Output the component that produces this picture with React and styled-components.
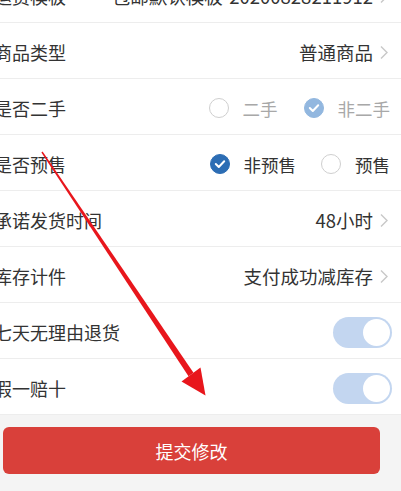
import React from 'react';
import styled, { createGlobalStyle } from 'styled-components';

const GlobalStyle = createGlobalStyle`
  html, body {
    margin: 0;
    padding: 0;
    background: #f4f4f4;
    overflow: hidden;
  }
  body {
    font-family: "Noto Sans CJK SC", "Noto Sans", sans-serif;
    color: #333;
  }
`;

const Page = styled.div`
  position: relative;
  width: 401px;
  height: 491px;
  overflow: hidden;
`;

const List = styled.div`
  margin-top: -33px;
  background: #fff;
`;

const Row = styled.div`
  display: flex;
  align-items: center;
  justify-content: space-between;
  box-sizing: border-box;
  height: 56px;
  padding-top: 3px;
  border-bottom: 1px solid #ededed;
  padding-right: ${p => p.$pr || 12}px;
`;

const Label = styled.span`
  margin-left: -6px;
  font-size: 18px;
  color: #333;
  white-space: nowrap;
`;

const Value = styled.span`
  display: flex;
  align-items: center;
  gap: 6px;
  font-size: 18.5px;
  color: #333;
  white-space: nowrap;
`;

const Chevron = () => (
  <svg width="10" height="15" viewBox="0 0 10 15">
    <path d="M2 1.5 L8 7.5 L2 13.5" fill="none" stroke="#c8c8c8" strokeWidth="1.4" />
  </svg>
);

const RadioGroup = styled.div`
  display: flex;
  align-items: center;
  gap: ${p => p.$gap || 26}px;
`;

const RadioItem = styled.label`
  display: flex;
  align-items: center;
  gap: 14px;
  font-size: 17.5px;
  color: ${p => (p.$disabled ? '#a8a8a8' : '#333')};
`;

const Circle = styled.span`
  width: 20px;
  height: 20px;
  box-sizing: border-box;
  border-radius: 50%;
  display: flex;
  align-items: center;
  justify-content: center;
  border: 1px solid ${p => (p.$checked ? p.$color : '#cfcfcf')};
  background: ${p => (p.$checked ? p.$color : '#fff')};
`;

const Radio = ({ checked, disabled, children }) => (
  <RadioItem $disabled={disabled}>
    <Circle $checked={checked} $color={disabled ? '#92b7df' : '#2c6db4'}>
      {checked && (
        <svg width="12" height="10" viewBox="0 0 12 10">
          <path d="M1.8 5 L4.8 8 L10.2 2.2" fill="none" stroke="#fff" strokeWidth="2" strokeLinecap="round" strokeLinejoin="round" />
        </svg>
      )}
    </Circle>
    {children}
  </RadioItem>
);

const Switch = styled.span`
  display: flex;
  justify-content: flex-end;
  align-items: center;
  width: 59px;
  height: 31px;
  box-sizing: border-box;
  padding: 2px;
  border-radius: 16px;
  background: #c3d6f0;

  &::after {
    content: '';
    width: 27px;
    height: 27px;
    border-radius: 50%;
    background: #fff;
  }
`;

const Footer = styled.div`
  padding: 12px 0 0 3px;
`;

const SubmitButton = styled.button`
  width: 377px;
  height: 47px;
  border: none;
  border-radius: 6px;
  background: #d9403a;
  color: #fff;
  font-family: "Noto Sans CJK SC", "Noto Sans", sans-serif;
  font-size: 18px;
`;

const ArrowOverlay = styled.svg`
  position: absolute;
  left: 0;
  top: 0;
  pointer-events: none;
`;

const rows = [
  { label: '运费模板', value: '包邮默认模板-20200828211912' },
  { label: '商品类型', value: '普通商品' },
];

export default function App() {
  return (
    <Page>
      <GlobalStyle />
      <List>
        {rows.map(r => (
          <Row key={r.label}>
            <Label>{r.label}</Label>
            <Value>{r.value}<Chevron /></Value>
          </Row>
        ))}
        <Row $pr={11}>
          <Label>是否二手</Label>
          <RadioGroup $gap={26}>
            <Radio disabled>二手</Radio>
            <Radio disabled checked>非二手</Radio>
          </RadioGroup>
        </Row>
        <Row $pr={11}>
          <Label>是否预售</Label>
          <RadioGroup $gap={25}>
            <Radio checked>非预售</Radio>
            <Radio>预售</Radio>
          </RadioGroup>
        </Row>
        <Row>
          <Label>承诺发货时间</Label>
          <Value>48小时<Chevron /></Value>
        </Row>
        <Row>
          <Label>库存计件</Label>
          <Value>支付成功减库存<Chevron /></Value>
        </Row>
        <Row $pr={9}>
          <Label>七天无理由退货</Label>
          <Switch />
        </Row>
        <Row $pr={9}>
          <Label>假一赔十</Label>
          <Switch />
        </Row>
      </List>
      <Footer>
        <SubmitButton>提交修改</SubmitButton>
      </Footer>
      <ArrowOverlay width="401" height="491" viewBox="0 0 401 491">
        <polygon
          points="42.6,151.6 41.4,152.4 188.5,376.2 193.5,372.8"
          fill="#e8161c"
        />
        <polygon points="181.5,381.5 200.5,367.5 205.5,395.5" fill="#e8161c" />
      </ArrowOverlay>
    </Page>
  );
}
